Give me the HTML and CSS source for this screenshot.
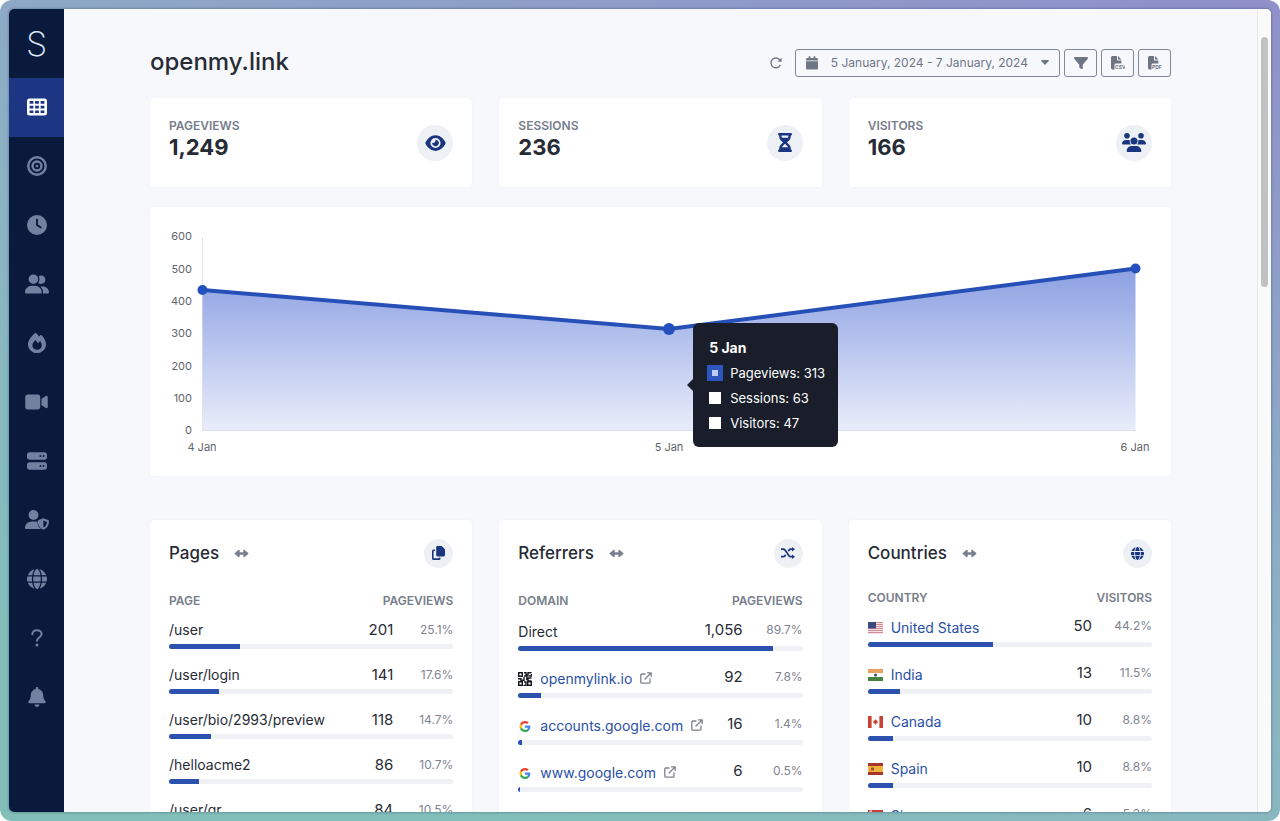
FILE: index.html
```html
<!DOCTYPE html>
<html lang="en">
<head>
<meta charset="utf-8">
<meta name="viewport" content="width=device-width, initial-scale=1">
<title>openmy.link analytics</title>
<link rel="stylesheet" href="styles.css">
</head>
<body>
<svg class="defs" width="0" height="0" aria-hidden="true">
  <defs>
    <symbol id="i-globe" viewBox="0 0 512 512"><path d="M352 256c0 22.2-1.2 43.6-3.3 64l-185.3 0c-2.2-20.4-3.3-41.8-3.3-64s1.2-43.6 3.3-64l185.3 0c2.2 20.4 3.3 41.8 3.3 64zm28.8-64l123.1 0c5.3 20.5 8.1 41.9 8.1 64s-2.8 43.5-8.1 64l-123.1 0c2.1-20.6 3.2-42 3.2-64s-1.1-43.4-3.2-64zm112.6-32l-116.7 0c-10-63.9-29.8-117.4-55.3-151.6c78.3 20.7 142 77.5 171.9 151.6zm-149.1 0l-176.6 0c6.1-36.4 15.5-68.6 27-94.7c10.5-23.6 22.2-40.7 33.5-51.5C239.4 3.2 248.7 0 256 0s16.6 3.2 27.8 13.8c11.3 10.8 23 27.9 33.5 51.5c11.6 26 20.9 58.2 27 94.7zm-209 0L18.6 160C48.6 85.9 112.2 29.1 190.6 8.4C165.1 42.6 145.3 96.1 135.3 160zM8.1 192l123.1 0c-2.1 20.6-3.2 42-3.2 64s1.1 43.4 3.2 64L8.1 320C2.8 299.5 0 278.1 0 256s2.8-43.5 8.1-64zM194.7 446.6c-11.6-26-20.9-58.2-27-94.6l176.6 0c-6.1 36.4-15.5 68.6-27 94.6c-10.5 23.6-22.2 40.7-33.5 51.5C272.6 508.8 263.3 512 256 512s-16.6-3.2-27.8-13.8c-11.3-10.8-23-27.9-33.5-51.5zM135.3 352c10 63.9 29.8 117.4 55.3 151.6C112.2 482.9 48.6 426.1 18.6 352l116.7 0zm358.1 0c-30 74.1-93.6 130.9-171.9 151.6c25.5-34.2 45.2-87.7 55.3-151.6l116.7 0z"/></symbol>
    <symbol id="i-arrows" viewBox="0 0 15 9"><path d="M4.400.9c.5-.4 1.300-.1 1.300.6v1.800h3.600V1.500c0-.7.800-1 1.300-.6l3.700 3c.4.300.4.900 0 1.200l-3.700 3c-.5.400-1.300.1-1.300-.6V5.700H5.700v1.800c0 .7-.8 1-1.300.6L.700 5.100c-.4-.3-.4-.9 0-1.200z"/></symbol>
    <symbol id="i-external" viewBox="0 0 12 12"><path d="M5 2H1.800a1 1 0 0 0-1 1v7.200a1 1 0 0 0 1 1H9a1 1 0 0 0 1-1V7M7.500.8h3.700v3.700M11 1 5 7" fill="none" stroke="currentColor" stroke-width="1.300" stroke-linecap="round" stroke-linejoin="round"/></symbol>
    <symbol id="i-google" viewBox="0 0 48 48"><path fill="#ea4335" d="M24 9.500c3.540 0 6.710 1.220 9.210 3.600l6.850-6.850C35.900 2.380 30.470 0 24 0 14.620 0 6.510 5.380 2.560 13.220l7.980 6.190C12.430 13.720 17.740 9.500 24 9.500z"/><path fill="#4285f4" d="M46.980 24.550c0-1.570-.15-3.090-.38-4.550H24v9.020h12.940c-.58 2.960-2.260 5.480-4.780 7.180l7.730 6c4.510-4.180 7.090-10.360 7.090-17.650z"/><path fill="#fbbc05" d="M10.530 28.590c-.48-1.450-.76-2.990-.76-4.590s.27-3.140.76-4.590l-7.980-6.190C.92 16.460 0 20.120 0 24c0 3.880.92 7.540 2.560 10.780l7.970-6.190z"/><path fill="#34a853" d="M24 48c6.480 0 11.930-2.130 15.890-5.810l-7.730-6c-2.150 1.450-4.920 2.300-8.160 2.300-6.260 0-11.570-4.220-13.470-9.910l-7.980 6.190C6.510 42.620 14.620 48 24 48z"/></symbol>
  </defs>
</svg>
<div class="window">
  <nav class="sidebar" aria-label="Main">
    <a class="logo" href="#">S</a>
    <a class="nav-item active" href="#" aria-label="Dashboard"><svg width="20" height="18" viewBox="0 0 20 18"><path fill-rule="evenodd" d="M2.500.5h15A2.500 2.500 0 0 1 20 3v12a2.500 2.500 0 0 1-2.500 2.500h-15A2.500 2.500 0 0 1 0 15V3A2.500 2.500 0 0 1 2.500.5zM2.600 3v2.700h3.800V3zm5.500 0v2.700h3.800V3zm5.500 0v2.700h3.800V3zM2.600 7.700v2.700h3.800V7.700zm5.500 0v2.700h3.800V7.700zm5.500 0v2.700h3.800V7.700zM2.600 12.400v2.700h3.800v-2.700zm5.500 0v2.700h3.800v-2.700zm5.500 0v2.700h3.800v-2.700z"/></svg></a>
    <a class="nav-item" href="#" aria-label="Goals"><svg width="20" height="20" viewBox="0 0 512 512"><g fill="none" stroke="currentColor" stroke-width="62"><circle cx="256" cy="256" r="224"/><circle cx="256" cy="256" r="114"/></g><circle cx="256" cy="256" r="34"/></svg></a>
    <a class="nav-item" href="#" aria-label="Realtime"><svg width="20" height="20" viewBox="0 0 512 512"><path fill-rule="evenodd" d="M256 0a256 256 0 1 1 0 512A256 256 0 1 1 256 0zM232 120l0 136c0 8 4 15.500 10.700 20l96 64c11 7.400 25.900 4.400 33.300-6.700s4.400-25.900-6.700-33.300L280 243.200 280 120c0-13.300-10.700-24-24-24s-24 10.700-24 24z"/></svg></a>
    <a class="nav-item" href="#" aria-label="Visitors"><svg width="24" height="20" viewBox="0 0 640 512"><path d="M96 128a128 128 0 1 1 256 0A128 128 0 1 1 96 128zM0 482.300C0 383.800 79.800 304 178.300 304l91.400 0C368.200 304 448 383.800 448 482.300c0 16.400-13.300 29.700-29.700 29.700L29.700 512C13.300 512 0 498.700 0 482.300zM609.300 512l-137.800 0c5.400-9.400 8.600-20.300 8.600-32l0-8c0-60.700-27.100-115.200-69.800-151.800c2.400-.1 4.700-.2 7.100-.2l61.400 0C567.800 320 640 392.200 640 481.300c0 17-13.800 30.700-30.700 30.700zM432 256c-31 0-59-12.600-79.300-32.900C372.400 196.500 384 163.600 384 128c0-26.800-6.600-52.100-18.300-74.300C384.300 40.100 407.200 32 432 32c61.900 0 112 50.100 112 112s-50.100 112-112 112z"/></svg></a>
    <a class="nav-item" href="#" aria-label="Heatmaps"><svg width="18" height="20" viewBox="0 0 18 20"><path fill-rule="evenodd" d="M6.800.3c.5-.4 1-.4 1.400 0 1 1 2 2.100 2.900 3.300l1.100-1.300c.4-.4 1-.5 1.400 0C16 4.700 18 8.300 18 11.200 18 16.300 14 20 9 20s-9-3.800-9-8.800C0 7.700 2.800 3.700 6.800.3zM9.100 16.800c2.700 0 4.700-1.700 4.700-4.300 0-1.700-.8-3.100-1.700-4.400l-2 2.200L7.300 7C5.700 8.900 4.400 10.500 4.400 12.500c0 2.600 2 4.300 4.700 4.300z"/></svg></a>
    <a class="nav-item" href="#" aria-label="Recordings"><svg width="23" height="20" viewBox="0 0 576 512"><path d="M0 128C0 92.700 28.700 64 64 64l256 0c35.300 0 64 28.700 64 64l0 256c0 35.300-28.700 64-64 64L64 448c-35.300 0-64-28.700-64-64L0 128zM559.100 99.800c10.400 5.600 16.900 16.400 16.900 28.200l0 256c0 11.800-6.500 22.600-16.900 28.200s-23 5-32.900-1.600l-96-64L416 337.100l0-17.100 0-128 0-17.100 14.200-9.500 96-64c9.800-6.500 22.400-7.200 32.900-1.600z"/></svg></a>
    <a class="nav-item" href="#" aria-label="Websites"><svg width="20" height="20" viewBox="0 0 512 512"><path fill-rule="evenodd" d="M64 32C28.700 32 0 60.700 0 96l0 64c0 35.300 28.700 64 64 64l384 0c35.300 0 64-28.700 64-64l0-64c0-35.300-28.700-64-64-64L64 32zm280 72a24 24 0 1 1 0 48 24 24 0 1 1 0-48zm56 24a24 24 0 1 1 48 0 24 24 0 1 1 -48 0zM64 288c-35.300 0-64 28.700-64 64l0 64c0 35.300 28.700 64 64 64l384 0c35.300 0 64-28.700 64-64l0-64c0-35.300-28.700-64-64-64L64 288zm280 72a24 24 0 1 1 0 48 24 24 0 1 1 0-48zm56 24a24 24 0 1 1 48 0 24 24 0 1 1 -48 0z"/></svg></a>
    <a class="nav-item" href="#" aria-label="Teams"><svg width="24" height="20" viewBox="0 0 24 20"><circle cx="8.500" cy="5" r="4.900"/><path fill-rule="evenodd" d="M6.900 11.500h3.400c.8 0 1.500.1 2.200.4.100 3 1.200 5.700 3.400 7.100H1.200C.5 19 0 18.500 0 17.900c0-3.600 3.100-6.400 6.900-6.400zM18.400 8.200l4.800 1.900c.5.200.8.600.8 1.100 0 3.100-1.200 6.500-5 8.200a1.400 1.400 0 0 1-1.200 0c-3.800-1.700-5-5.100-5-8.200 0-.5.300-.9.800-1.100zM18.400 10.500v6.900c2.500-1.100 3.400-3.200 3.500-5.500z"/></svg></a>
    <a class="nav-item" href="#" aria-label="Domains"><svg width="20" height="20"><use href="#i-globe"/></svg></a>
    <a class="nav-item" href="#" aria-label="Help"><svg width="12" height="18" viewBox="0 0 12 18"><path d="M1.300 5.200C1.300 2.700 3.300 1.200 6 1.200c2.600 0 4.600 1.600 4.600 3.900 0 3.300-4.600 3.400-4.600 6.600" fill="none" stroke="currentColor" stroke-width="2" stroke-linecap="round"/><circle cx="6" cy="16" r="1.500"/></svg></a>
    <a class="nav-item" href="#" aria-label="Notifications"><svg width="18" height="20" viewBox="0 0 448 512"><path d="M224 0c-17.700 0-32 14.300-32 32l0 19.200C119 66 64 130.600 64 208l0 18.800c0 47-17.300 92.400-48.500 127.600l-7.400 8.300c-8.400 9.400-10.400 22.900-5.300 34.400S19.400 416 32 416l384 0c12.600 0 24-7.400 29.200-18.900s3.100-25-5.300-34.400l-7.400-8.300C401.300 319.200 384 273.900 384 226.800l0-18.800c0-77.400-55-142-128-156.800L256 32c0-17.700-14.300-32-32-32zm45.300 493.300c12-12 18.700-28.300 18.700-45.300l-128 0c0 17 6.700 33.300 18.700 45.300s28.300 18.700 45.300 18.700s33.300-6.700 45.300-18.700z"/></svg></a>
  </nav>

  <main class="main">
    <header class="topbar">
      <h1>openmy.link</h1>
      <div class="tools">
        <button class="refresh" type="button" aria-label="Refresh"><svg width="12" height="12" viewBox="0 0 12 12"><path d="M10.300 8A4.900 4.900 0 1 1 9.600 2.700l1.200 1.200" fill="none" stroke="currentColor" stroke-width="1.400"/><path d="M11.600.8v4H7.600z"/></svg></button>
        <button class="tool date" type="button">
          <svg width="12" height="14" viewBox="0 0 12 14"><path d="M3.500 0c.5 0 .9.400.9.900V2h3.200V.9a.9.900 0 0 1 1.800 0V2h1.100c.8 0 1.500.6 1.500 1.300V4.400H0V3.300C0 2.600.7 2 1.500 2h1.100V.9c0-.5.400-.9.900-.9zM0 5.300h12v6.900c0 .8-.6 1.300-1.300 1.300H1.300A1.300 1.300 0 0 1 0 12.200z"/></svg>
          <span>5 January, 2024 - 7 January, 2024</span>
          <svg width="8" height="5" viewBox="0 0 8 5"><path d="M.6 0h6.800c.5 0 .8.500.4.900L4.500 4.500a.7.700 0 0 1-1 0L.2.900C-.2.500.1 0 .6 0z"/></svg>
        </button>
        <button class="tool" type="button" aria-label="Filter"><svg width="14" height="14" viewBox="0 0 512 512"><path d="M3.900 54.900C10.500 40.900 24.500 32 40 32l432 0c15.500 0 29.500 8.900 36.100 22.900s4.600 30.500-5.200 42.500L320 320.900 320 448c0 12.100-6.800 23.200-17.700 28.600s-23.800 4.300-33.500-3l-64-48c-8.100-6-12.800-15.500-12.800-25.600l0-79.100L9 97.300C-.7 85.400-2.800 68.800 3.900 54.900z"/></svg></button>
        <button class="tool" type="button" aria-label="Export CSV"><svg class="file" width="14" height="14" viewBox="0 0 14 14"><path d="M1.700 0H6v3.500c0 .5.400.9.900.9h3.500v3H5.100c-.9 0-1.600.7-1.600 1.600v4.500H1.700C.8 13.500 0 12.900 0 12V1.600C0 .7.800 0 1.700 0zM7 0l3.400 3.500H7z"/><text x="4" y="13">CSV</text></svg></button>
        <button class="tool" type="button" aria-label="Export PDF"><svg class="file" width="14" height="14" viewBox="0 0 14 14"><path d="M1.700 0H6v3.500c0 .5.400.9.900.9h3.500v3H5.100c-.9 0-1.600.7-1.600 1.600v4.500H1.700C.8 13.500 0 12.900 0 12V1.600C0 .7.800 0 1.700 0zM7 0l3.400 3.500H7z"/><text x="4" y="13">PDF</text></svg></button>
      </div>
    </header>

    <section class="columns stats" aria-label="Totals">
      <article class="card stat"><div><h2 class="label">Pageviews</h2><p class="value">1,249</p></div><span class="badge"><svg width="21" height="18" viewBox="0 0 576 512"><path fill-rule="evenodd" d="M288 32c-80.800 0-145.500 36.800-192.600 80.600C48.600 156 17.300 208 2.500 243.700c-3.300 7.900-3.300 16.700 0 24.600C17.300 304 48.600 356 95.400 399.400C142.500 443.200 207.200 480 288 480s145.500-36.800 192.600-80.600c46.800-43.500 78.100-95.400 93-131.100c3.300-7.900 3.300-16.700 0-24.600c-14.900-35.700-46.200-87.700-93-131.100C433.500 68.800 368.800 32 288 32zM144 256a144 144 0 1 1 288 0 144 144 0 1 1 -288 0zm144-64c0 35.300-28.700 64-64 64c-7.100 0-13.900-1.200-20.300-3.300c-5.500-1.800-11.900 1.600-11.700 7.400c.3 6.900 1.300 13.800 3.200 20.700c13.700 51.200 66.400 81.600 117.600 67.900s81.600-66.400 67.900-117.600c-11.100-41.500-47.800-69.400-88.600-71.100c-5.800-.2-9.200 6.100-7.400 11.700c2.100 6.400 3.300 13.200 3.300 20.300z"/></svg></span></article>
      <article class="card stat"><div><h2 class="label">Sessions</h2><p class="value">236</p></div><span class="badge"><svg width="14" height="19" viewBox="0 0 14 19"><path fill-rule="evenodd" d="M1.200 0h11.600a1.200 1.200 0 0 1 0 2.400v.8c0 1.600-.6 3.100-1.700 4.200L9 9.500l2.100 2.100c1.100 1.100 1.700 2.600 1.700 4.200v.8a1.200 1.200 0 0 1 0 2.400H1.200a1.200 1.200 0 0 1 0-2.400v-.8c0-1.600.6-3.100 1.700-4.200L5 9.500 2.900 7.400A6 6 0 0 1 1.200 3.200v-.8a1.200 1.200 0 0 1 0-2.400zM3.600 2.400v.8c0 .6.100 1.100.3 1.600h6.200c.2-.5.300-1 .3-1.600v-.8zM7 10.800l-2.700 2.600c-.3.300-.5.600-.6.900h6.600c-.2-.3-.4-.6-.6-.9z"/></svg></span></article>
      <article class="card stat"><div><h2 class="label">Visitors</h2><p class="value">166</p></div><span class="badge"><svg width="24" height="19" viewBox="0 0 24 19"><circle cx="5" cy="2.800" r="2.800"/><circle cx="19" cy="2.800" r="2.800"/><circle cx="12" cy="8" r="3.500"/><path d="M4.200 7h2.600c.3 0 .7.100 1 .2-.3 1.800.2 3.200 1.300 4.400H.8c-.4 0-.8-.4-.8-.8C0 8.700 1.900 7 4.200 7zM19.800 7h-2.600c-.3 0-.7.100-1 .2.300 1.800-.2 3.200-1.300 4.400h8.300c.4 0 .8-.4.8-.8 0-2.100-1.900-3.800-4.200-3.800zM9.600 12.900h4.800c2.700 0 4.900 2.200 4.900 5 0 .6-.4 1.100-1 1.100H5.700c-.6 0-1-.5-1-1.100 0-2.800 2.200-5 4.900-5z"/></svg></span></article>
    </section>

    <section class="card chart" aria-label="Pageviews by day">
      <svg class="plot" viewBox="0 0 1021 269" role="img" aria-label="Pageviews, 4 Jan to 6 Jan">
        <defs><linearGradient id="area" x1="0" y1="60" x2="0" y2="224" gradientUnits="userSpaceOnUse"><stop offset="0" stop-color="#8b9fe2"/><stop offset="1" stop-color="#e9edfa"/></linearGradient></defs>
        <path d="M52.500 30v194" stroke="#e3e5ea"/>
        <path d="M52.500 83 519 122 985.500 61.500V223.500H52.500z" fill="url(#area)"/>
        <path d="M52 223.500h934" stroke="#dcdfe6"/>
        <path d="M52.500 83 519 122 985.500 61.500" fill="none" stroke="#2650b8" stroke-width="4"/>
        <g fill="#2350bd"><circle cx="52.500" cy="83" r="5"/><circle cx="519" cy="122" r="6"/><circle cx="985.500" cy="61.500" r="5"/></g>
        <g class="axis" text-anchor="end"><text x="42" y="33">600</text><text x="42" y="66">500</text><text x="42" y="98">400</text><text x="42" y="130">300</text><text x="42" y="163">200</text><text x="42" y="195">100</text><text x="42" y="227">0</text></g>
        <g class="axis" text-anchor="middle"><text x="52" y="244">4 Jan</text><text x="519" y="244">5 Jan</text><text x="985" y="244">6 Jan</text></g>
      </svg>
      <div class="tooltip" role="tooltip">
        <strong>5 Jan</strong>
        <ul>
          <li><i class="swatch on"></i>Pageviews: 313</li>
          <li><i class="swatch"></i>Sessions: 63</li>
          <li><i class="swatch"></i>Visitors: 47</li>
        </ul>
      </div>
    </section>

    <section class="columns reports" aria-label="Reports">
      <article class="card report">
        <header><h2>Pages</h2><svg class="resize" width="15" height="9"><use href="#i-arrows"/></svg><span class="badge small"><svg width="13" height="14" viewBox="0 0 13 14"><path d="M5.500 0h4.200L13 3.300v5.800c0 .7-.6 1.300-1.300 1.300H5.500c-.7 0-1.300-.6-1.300-1.300V1.300C4.200.6 4.800 0 5.500 0z"/><path d="M3 4.200H1.500a.7.700 0 0 0-.7.700v7.500c0 .4.300.7.700.7H7a.7.700 0 0 0 .7-.7v-.9" fill="none" stroke="currentColor" stroke-width="1.600"/></svg></span></header>
        <table class="pages">
          <thead><tr><th>Page</th><th colspan="2">Pageviews</th></tr></thead>
          <tbody>
            <tr><td>/user</td><td>201</td><td>25.1%</td></tr><tr class="bar"><td colspan="3"><div><i style="width:25.1%"></i></div></td></tr>
            <tr><td>/user/login</td><td>141</td><td>17.6%</td></tr><tr class="bar"><td colspan="3"><div><i style="width:17.6%"></i></div></td></tr>
            <tr><td>/user/bio/2993/preview</td><td>118</td><td>14.7%</td></tr><tr class="bar"><td colspan="3"><div><i style="width:14.7%"></i></div></td></tr>
            <tr><td>/helloacme2</td><td>86</td><td>10.7%</td></tr><tr class="bar"><td colspan="3"><div><i style="width:10.7%"></i></div></td></tr>
            <tr><td>/user/qr</td><td>84</td><td>10.5%</td></tr><tr class="bar"><td colspan="3"><div><i style="width:10.5%"></i></div></td></tr>
          </tbody>
        </table>
      </article>

      <article class="card report">
        <header><h2>Referrers</h2><svg class="resize" width="15" height="9"><use href="#i-arrows"/></svg><span class="badge small"><svg width="14" height="12" viewBox="0 0 14 12"><path d="M0 2.200h2.200c.8 0 1.300.3 1.800.9l4 5.600c.5.700 1 1 1.800 1H12M0 9.700h2.200c.8 0 1.300-.3 1.800-1l.7-1M7.300 4.200l.7-1c.5-.7 1-1 1.800-1H12" fill="none" stroke="currentColor" stroke-width="1.700"/><path d="M11 0v4.500l3-2.300zM11 7.500V12l3-2.300z"/></svg></span></header>
        <table class="linked">
          <thead><tr><th>Domain</th><th colspan="2">Pageviews</th></tr></thead>
          <tbody>
            <tr><td>Direct</td><td>1,056</td><td>89.7%</td></tr><tr class="bar"><td colspan="3"><div><i style="width:89.7%"></i></div></td></tr>
            <tr><td><span class="name"><svg width="14" height="14" viewBox="0 0 14 14"><g fill="none" stroke="#15181e" stroke-width="1.400"><path d="M.7.700h3.600v3.600H.7zM.7 9.700h3.600v3.600H.7zM9.700 9.700h3.600v3.600H9.700z"/><path d="M6 .7h2v2h2V.7h3.500M6 4h3v2h4.500M0 6.700h3v1.500h3V5M8 7.500h2v1.500h3.500M6 10h2v3.500H5.500M10.500 4h3V2"/></g></svg><a href="#">openmylink.io</a><svg class="ext" width="12" height="12"><use href="#i-external"/></svg></span></td><td>92</td><td>7.8%</td></tr><tr class="bar"><td colspan="3"><div><i style="width:7.8%"></i></div></td></tr>
            <tr><td><span class="name"><svg width="14" height="11"><use href="#i-google"/></svg><a href="#">accounts.google.com</a><svg class="ext" width="12" height="12"><use href="#i-external"/></svg></span></td><td>16</td><td>1.4%</td></tr><tr class="bar"><td colspan="3"><div><i style="width:1.4%"></i></div></td></tr>
            <tr><td><span class="name"><svg width="14" height="11"><use href="#i-google"/></svg><a href="#">www.google.com</a><svg class="ext" width="12" height="12"><use href="#i-external"/></svg></span></td><td>6</td><td>0.5%</td></tr><tr class="bar"><td colspan="3"><div><i style="width:0.5%"></i></div></td></tr>
          </tbody>
        </table>
      </article>

      <article class="card report">
        <header><h2>Countries</h2><svg class="resize" width="15" height="9"><use href="#i-arrows"/></svg><span class="badge small"><svg width="13" height="13"><use href="#i-globe"/></svg></span></header>
        <table class="linked countries">
          <thead><tr><th>Country</th><th colspan="2">Visitors</th></tr></thead>
          <tbody>
            <tr><td><span class="name"><svg width="15" height="12" viewBox="0 0 15 12"><path fill="#f5e4e6" d="M0 0h15v12H0z"/><path stroke="#d48a96" d="M0 .5h15M0 2.500h15M0 4.500h15M0 6.500h15M0 8.500h15M0 10.500h15"/><path fill="#3d4a80" d="M0 0h8v6.500H0z"/></svg><a href="#">United States</a></span></td><td>50</td><td>44.2%</td></tr><tr class="bar"><td colspan="3"><div><i style="width:44.2%"></i></div></td></tr>
            <tr><td><span class="name"><svg width="15" height="12" viewBox="0 0 15 12"><path fill="#e9a263" d="M0 0h15v4H0z"/><path fill="#fff" d="M0 4h15v4H0z"/><path fill="#458341" d="M0 8h15v4H0z"/><circle cx="7.500" cy="6" r="1.500" fill="#334a70"/></svg><a href="#">India</a></span></td><td>13</td><td>11.5%</td></tr><tr class="bar"><td colspan="3"><div><i style="width:11.5%"></i></div></td></tr>
            <tr><td><span class="name"><svg width="15" height="12" viewBox="0 0 15 12"><path fill="#fff" d="M0 0h15v12H0z"/><path fill="#c94134" d="M0 0h3.600v12H0zM11.400 0H15v12h-3.600zM7.500 3l.8 1.500.9-.3-.1 1.300h1.100L9 7.500H7.800V9h-.6V7.500H6L4.800 5.500h1.100l-.1-1.300.9.300z"/></svg><a href="#">Canada</a></span></td><td>10</td><td>8.8%</td></tr><tr class="bar"><td colspan="3"><div><i style="width:8.8%"></i></div></td></tr>
            <tr><td><span class="name"><svg width="15" height="12" viewBox="0 0 15 12"><path fill="#a83529" d="M0 0h15v12H0z"/><path fill="#efb440" d="M0 3h15v6H0z"/><path fill="#a8512f" d="M3 4.500h3v3H3z"/></svg><a href="#">Spain</a></span></td><td>10</td><td>8.8%</td></tr><tr class="bar"><td colspan="3"><div><i style="width:8.8%"></i></div></td></tr>
            <tr><td><span class="name"><svg width="15" height="12" viewBox="0 0 15 12"><path fill="#fff" d="M0 0h15v12H0z"/><path fill="#c9403a" d="M0 0h15v6H0z"/><path d="M4 1.200a2 2 0 1 0 0 3.600" fill="none" stroke="#fff"/></svg><a href="#">Singapore</a></span></td><td>6</td><td>5.3%</td></tr><tr class="bar"><td colspan="3"><div><i style="width:5.3%"></i></div></td></tr>
          </tbody>
        </table>
      </article>
    </section>
  </main>
  <div class="scrollbar" aria-hidden="true"><i></i></div>
</div>
</body>
</html>
```
FILE: styles.css
```css
* { box-sizing: border-box; }
html { background: #fff; height: 100%; }
body {
  margin: 0;
  height: 100vh;
  padding: 9px;
  border-radius: 12px;
  overflow: hidden;
  background: linear-gradient(200deg, #9090cb 0%, #8cb2c4 50%, #82bfb9 85%);
  font-family: Inter, "Liberation Sans", sans-serif;
  color: #272b35;
}
h1, h2, p, ul { margin: 0; padding: 0; }
a { color: #2a4fa8; text-decoration: none; }
svg { display: block; fill: currentColor; flex: none; }
button { font: inherit; color: inherit; background: none; border: 0; padding: 0; }
.defs { position: absolute; }

.window {
  display: flex;
  height: 100%;
  overflow: hidden;
  border-radius: 5px;
  background: #f7f8fc;
  box-shadow: 0 0 3px rgba(20, 40, 80, .5);
}

.sidebar { flex: none; width: 55px; background: #091a3c; overflow: hidden; }
.logo {
  display: grid;
  place-items: center;
  height: 69px;
  color: #dfe8f8;
  font-size: 34px;
  font-weight: 200;
}
.nav-item { display: grid; place-items: center; height: 59px; padding-bottom: 2px; color: #71819f; }
.nav-item.active { background: #1c3684; color: #fff; }

.main { flex: 1; min-width: 0; padding: 36px 86px 0; overflow: hidden; }
.topbar { display: flex; align-items: center; justify-content: space-between; height: 35px; }
h1 { padding-bottom: 2px; font-size: 24px; font-weight: 500; line-height: 32px; }
.tools { display: flex; align-items: center; gap: 4px; color: #6e7686; }
.refresh { margin-right: 9px; }
.tool {
  display: flex;
  align-items: center;
  justify-content: center;
  width: 33px;
  height: 28px;
  border: 1px solid #80879a;
  border-radius: 3px;
}
.date { width: auto; padding: 0 10px; gap: 13px; font-size: 12px; }
.file text { font-size: 5px; font-weight: 700; }

.columns { display: grid; grid-template-columns: repeat(3, minmax(0, 1fr)); gap: 27px; }
.card { background: #fff; border-radius: 4px; box-shadow: 0 0 3px rgba(40, 60, 120, .04); }
.stats { margin-top: 18px; }
.stat { display: flex; align-items: center; justify-content: space-between; height: 89px; padding: 0 19px; }
.label, th { font-size: 12px; font-weight: 600; line-height: 16px; color: #777d8b; text-transform: uppercase; }
.value { margin: 0 0 7px; font-size: 22px; font-weight: 700; line-height: 26px; }
.badge {
  display: grid;
  place-items: center;
  flex: none;
  width: 36px;
  height: 36px;
  border-radius: 50%;
  background: #edf1f5;
  color: #1b3681;
}
.badge.small { width: 29px; height: 29px; margin-left: auto; }

.chart { position: relative; margin-top: 20px; }
.plot { width: 100%; height: auto; }
.axis { font-size: 11px; fill: #60646c; }
.tooltip {
  position: absolute;
  left: 53.2%;
  top: 43%;
  padding: 16px 13px 16px 16px;
  border-radius: 6px;
  background: #191e2a;
  color: #fff;
  font-size: 13px;
}
.tooltip::before {
  content: "";
  position: absolute;
  left: -6px;
  top: 56px;
  border: 6px solid transparent;
  border-left: 0;
  border-right-color: #191e2a;
}
.tooltip strong { display: block; font-size: 14px; font-weight: 700; line-height: 18px; }
.tooltip ul { display: grid; gap: 9px; margin-top: 8px; list-style: none; }
.tooltip li { display: flex; align-items: center; gap: 9px; line-height: 16px; }
.swatch { width: 12px; height: 12px; background: #fff; }
.swatch.on { background: #bfcdf6; border: 3px solid #2c55bd; box-shadow: 0 0 0 2px #2c55bd; }

.reports { margin-top: 44px; }
.report { height: 420px; padding: 18px 19px; }
.report header { display: flex; align-items: center; height: 30px; }
.report h2 { font-size: 17px; font-weight: 500; line-height: 24px; }
.resize { margin-left: 15px; color: #788091; }

table { width: 100%; margin-top: 25px; border-collapse: collapse; }
th, td { padding: 0; text-align: left; vertical-align: top; }
th { height: 17px; }
th:last-child, td:nth-child(n+2) { text-align: right; }
td { font-size: 15px; line-height: 20px; }
td:first-child { font-size: 14px; }
td:nth-child(3) { width: 60px; font-size: 12px; color: #7f8490; }
tbody tr:not(.bar) td { padding-top: 10px; height: 34px; }
.bar div { height: 5px; border-radius: 3px; overflow: hidden; background: #eff1f4; }
.bar i { display: block; height: 5px; background: #2d51ae; }
.bar td { height: 11px; }
.linked tbody tr:not(.bar) td { height: 36px; }
.linked tbody tr:not(.bar) td:first-child { padding-top: 12px; }
.countries { margin-top: 22px; }
.countries th { height: 16px; }
.name { display: flex; align-items: center; gap: 8px; }
.ext { color: #7d828c; margin-bottom: 3px; }

.scrollbar { flex: none; width: 14px; padding: 28px 3px 0 3px; border-left: 1px solid #e6e7ea; background: #fafafa; }
.scrollbar i { display: block; height: 250px; border-radius: 4px; background: #c1c2c4; }
```
